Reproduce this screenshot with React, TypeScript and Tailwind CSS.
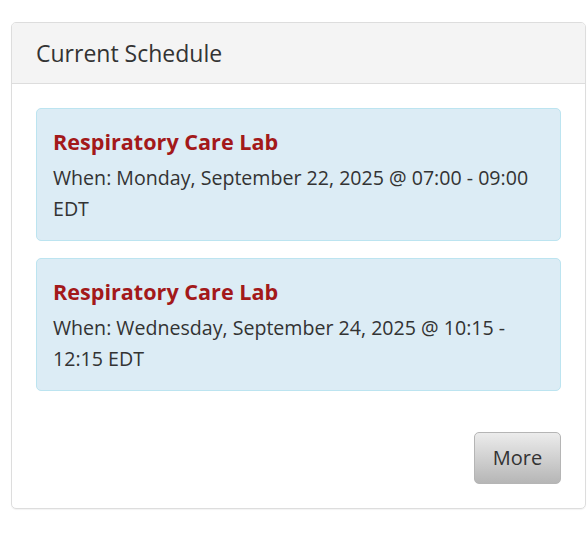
import React from 'react';

interface Session {
  title: string;
  when: string;
}

const sessions: Session[] = [
  { title: 'Respiratory Care Lab', when: 'When: Monday, September 22, 2025 @ 07:00 - 09:00 EDT' },
  { title: 'Respiratory Care Lab', when: 'When: Wednesday, September 24, 2025 @ 10:15 - 12:15 EDT' },
];

const App: React.FC = () => {
  return (
    <div className="min-h-[534px] bg-white pt-[22px] pl-[11px] pr-[2px] font-['Open_Sans',sans-serif] text-[#333]">
      <div className="rounded-[5px] border border-[#dddddd] shadow-[0_1px_1px_rgba(0,0,0,0.05)]">
        {/* Header */}
        <div className="h-[61px] rounded-t-[4px] border-b border-[#dddddd] bg-[#f4f4f4] px-6 flex items-center">
          <h3 className="text-[23px] leading-none text-[#333]">Current Schedule</h3>
        </div>

        {/* Body */}
        <div className="p-6 pb-6">
          <div className="flex flex-col gap-[17px]">
            {sessions.map((s, i) => (
              <div
                key={i}
                className="rounded-[5px] border border-[#bce4f0] bg-[#dcecf5] px-4 pt-[19px] pb-[16px]"
              >
                <h4 className="text-[21.6px] font-bold leading-[28px] text-[#a3191a]">{s.title}</h4>
                <p className="mt-[6px] text-[19.6px] leading-[31px] text-[#333]">{s.when}</p>
              </div>
            ))}
          </div>

          <div className="mt-[41px] flex justify-end">
            <button className="h-[52px] w-[87px] rounded-[5px] border border-[#b5b5b5] bg-gradient-to-b from-[#ececec] to-[#b6b6b6] text-[20px] text-[#333]">
              More
            </button>
          </div>
        </div>
      </div>
    </div>
  );
};

export default App;
